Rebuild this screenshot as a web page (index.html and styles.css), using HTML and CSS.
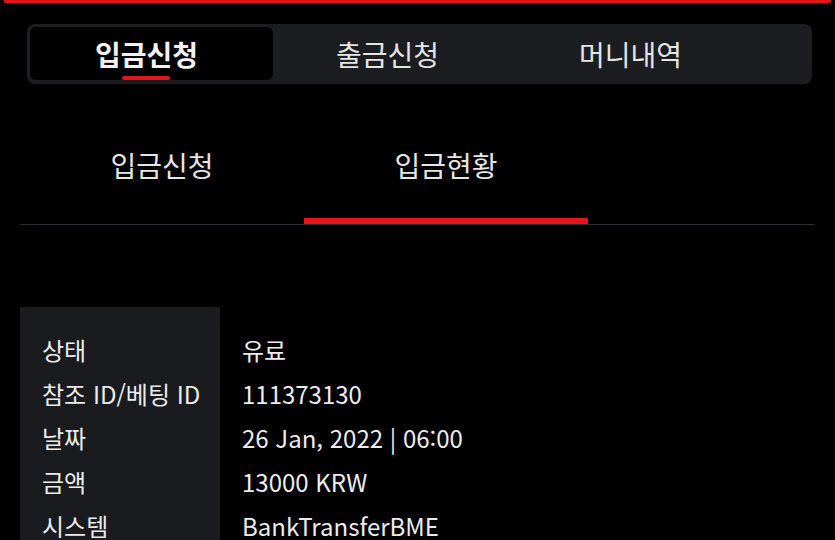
FILE: index.html
```html
<!DOCTYPE html>
<html lang="ko">
  <head>
    <meta charset="UTF-8" />
    <meta name="viewport" content="width=device-width, initial-scale=1.0" />
    <title>입금현황</title>
    <link rel="stylesheet" href="styles.css">
  </head>
  <body>
    <div class="top-bar"></div>

    <div class="main-tabs">
      <div class="main-tab active"><span>입금신청</span></div>
      <div class="main-tab"><span>출금신청</span></div>
      <div class="main-tab"><span>머니내역</span></div>
    </div>

    <div class="sub-tabs">
      <div class="sub-tab">입금신청</div>
      <div class="sub-tab active">입금현황</div>
    </div>

    <div class="details">
      <div class="row">
        <div class="label">상태</div>
        <div class="value">유료</div>
      </div>
      <div class="row">
        <div class="label">참조 ID/베팅 ID</div>
        <div class="value">111373130</div>
      </div>
      <div class="row">
        <div class="label">날짜</div>
        <div class="value">26 Jan, 2022 | 06:00</div>
      </div>
      <div class="row">
        <div class="label">금액</div>
        <div class="value">13000 KRW</div>
      </div>
      <div class="row">
        <div class="label">시스템</div>
        <div class="value">BankTransferBME</div>
      </div>
    </div>
  </body>
</html>
```

FILE: styles.css
```css
body {
  font-family: "Noto Sans CJK KR", "Noto Sans", sans-serif;
  margin: 0;
  padding: 0;
  background-color: #000;
  color: #ececec;
  overflow: hidden;
}
.top-bar {
  height: 0;
  margin: 0 4px;
  border: 3px solid #e3141b;
  border-top: 0;
  border-radius: 0 0 8px 8px;
}
.main-tabs {
  display: flex;
  margin: 21px 23px 0 27px;
  padding: 3px 3px 4px;
  background-color: #1c1d21;
  border-radius: 8px;
}
.main-tab {
  width: 243px;
  height: 53px;
  display: flex;
  justify-content: center;
  align-items: center;
  padding-right: 14px;
  box-sizing: border-box;
  font-size: 28px;
  color: #e6e6e6;
}
.main-tab span {
  position: relative;
  line-height: 36px;
}
.main-tab.active {
  background-color: #000;
  border-radius: 6px;
  padding-right: 10px;
  font-weight: 700;
  color: #f2f2f2;
}
.main-tab.active span::after {
  content: "";
  position: absolute;
  top: calc(100% + 4px);
  left: 50%;
  width: 48px;
  height: 4px;
  margin-left: -24px;
  border-radius: 2px;
  background-color: #e3141b;
}
.sub-tabs {
  display: grid;
  grid-template-columns: repeat(2, 284px);
  margin: 40px 20px 0;
  border-bottom: 1px solid #2c2d33;
}
.sub-tab {
  position: relative;
  height: 100px;
  padding-top: 22px;
  box-sizing: border-box;
  text-align: center;
  font-size: 28px;
  line-height: 38px;
  color: #e6e6e6;
}
.sub-tab.active::after {
  content: "";
  position: absolute;
  left: 0;
  right: 0;
  bottom: 0;
  height: 6px;
  background-color: #e3141b;
}
.details {
  margin: 82px 20px 0;
  padding-top: 20px;
  background: linear-gradient(to right, #1a1b1f 200px, transparent 200px);
}
.row {
  display: grid;
  grid-template-columns: 200px 1fr;
  height: 44px;
  align-items: center;
  font-size: 24px;
}
.label {
  padding-left: 22px;
}
.value {
  padding-left: 22px;
}
```
